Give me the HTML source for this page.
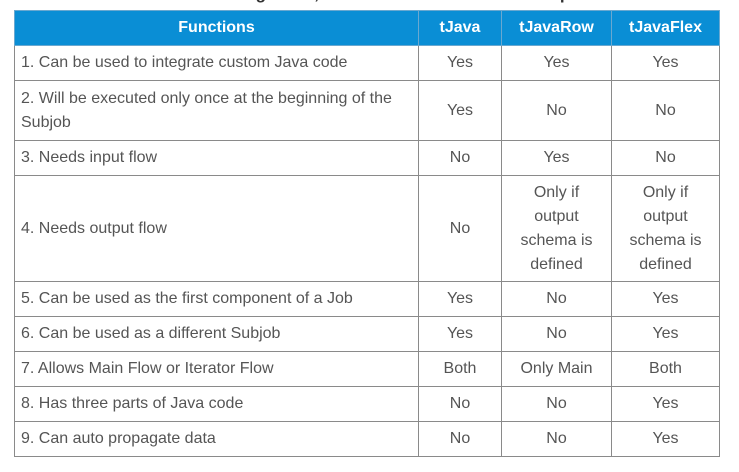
<!DOCTYPE html>
<html><head><style>
body{margin:0;background:#fff;width:739px;height:472px;overflow:hidden;position:relative;font-family:"Liberation Sans",sans-serif;}
.title{position:absolute;left:0;width:739px;top:-16px;text-align:center;font-size:17px;font-weight:bold;color:#333;}
table{position:absolute;left:14px;top:10px;border-collapse:collapse;width:705px;table-layout:fixed;}
td,th{border:1px solid #8a8a8a;font-size:16px;color:#555;padding:0 6px;line-height:24px;}
th{background:#0a8ed5;color:#fff;font-weight:bold;height:34px;text-align:center;border-color:#6aa8d0;}
td{height:34px;}
td.c{text-align:center;}
</style></head><body>
<div class="title">Differences among tJava, tJavaRow and tJavaFlex components</div>
<table>
<colgroup><col style="width:404px"><col style="width:83px"><col style="width:110px"><col style="width:108px"></colgroup>
<tr><th>Functions</th><th>tJava</th><th>tJavaRow</th><th>tJavaFlex</th></tr>
<tr><td>1. Can be used to integrate custom Java code</td><td class="c">Yes</td><td class="c">Yes</td><td class="c">Yes</td></tr>
<tr><td style="height:59px">2. Will be executed only once at the beginning of the Subjob</td><td class="c">Yes</td><td class="c">No</td><td class="c">No</td></tr>
<tr><td>3. Needs input flow</td><td class="c">No</td><td class="c">Yes</td><td class="c">No</td></tr>
<tr><td style="height:105px">4. Needs output flow</td><td class="c">No</td><td class="c">Only if<br>output<br>schema is<br>defined</td><td class="c">Only if<br>output<br>schema is<br>defined</td></tr>
<tr><td>5. Can be used as the first component of a Job</td><td class="c">Yes</td><td class="c">No</td><td class="c">Yes</td></tr>
<tr><td>6. Can be used as a different Subjob</td><td class="c">Yes</td><td class="c">No</td><td class="c">Yes</td></tr>
<tr><td>7. Allows Main Flow or Iterator Flow</td><td class="c">Both</td><td class="c">Only Main</td><td class="c">Both</td></tr>
<tr><td>8. Has three parts of Java code</td><td class="c">No</td><td class="c">No</td><td class="c">Yes</td></tr>
<tr><td>9. Can auto propagate data</td><td class="c">No</td><td class="c">No</td><td class="c">Yes</td></tr>
</table>
</body></html>
